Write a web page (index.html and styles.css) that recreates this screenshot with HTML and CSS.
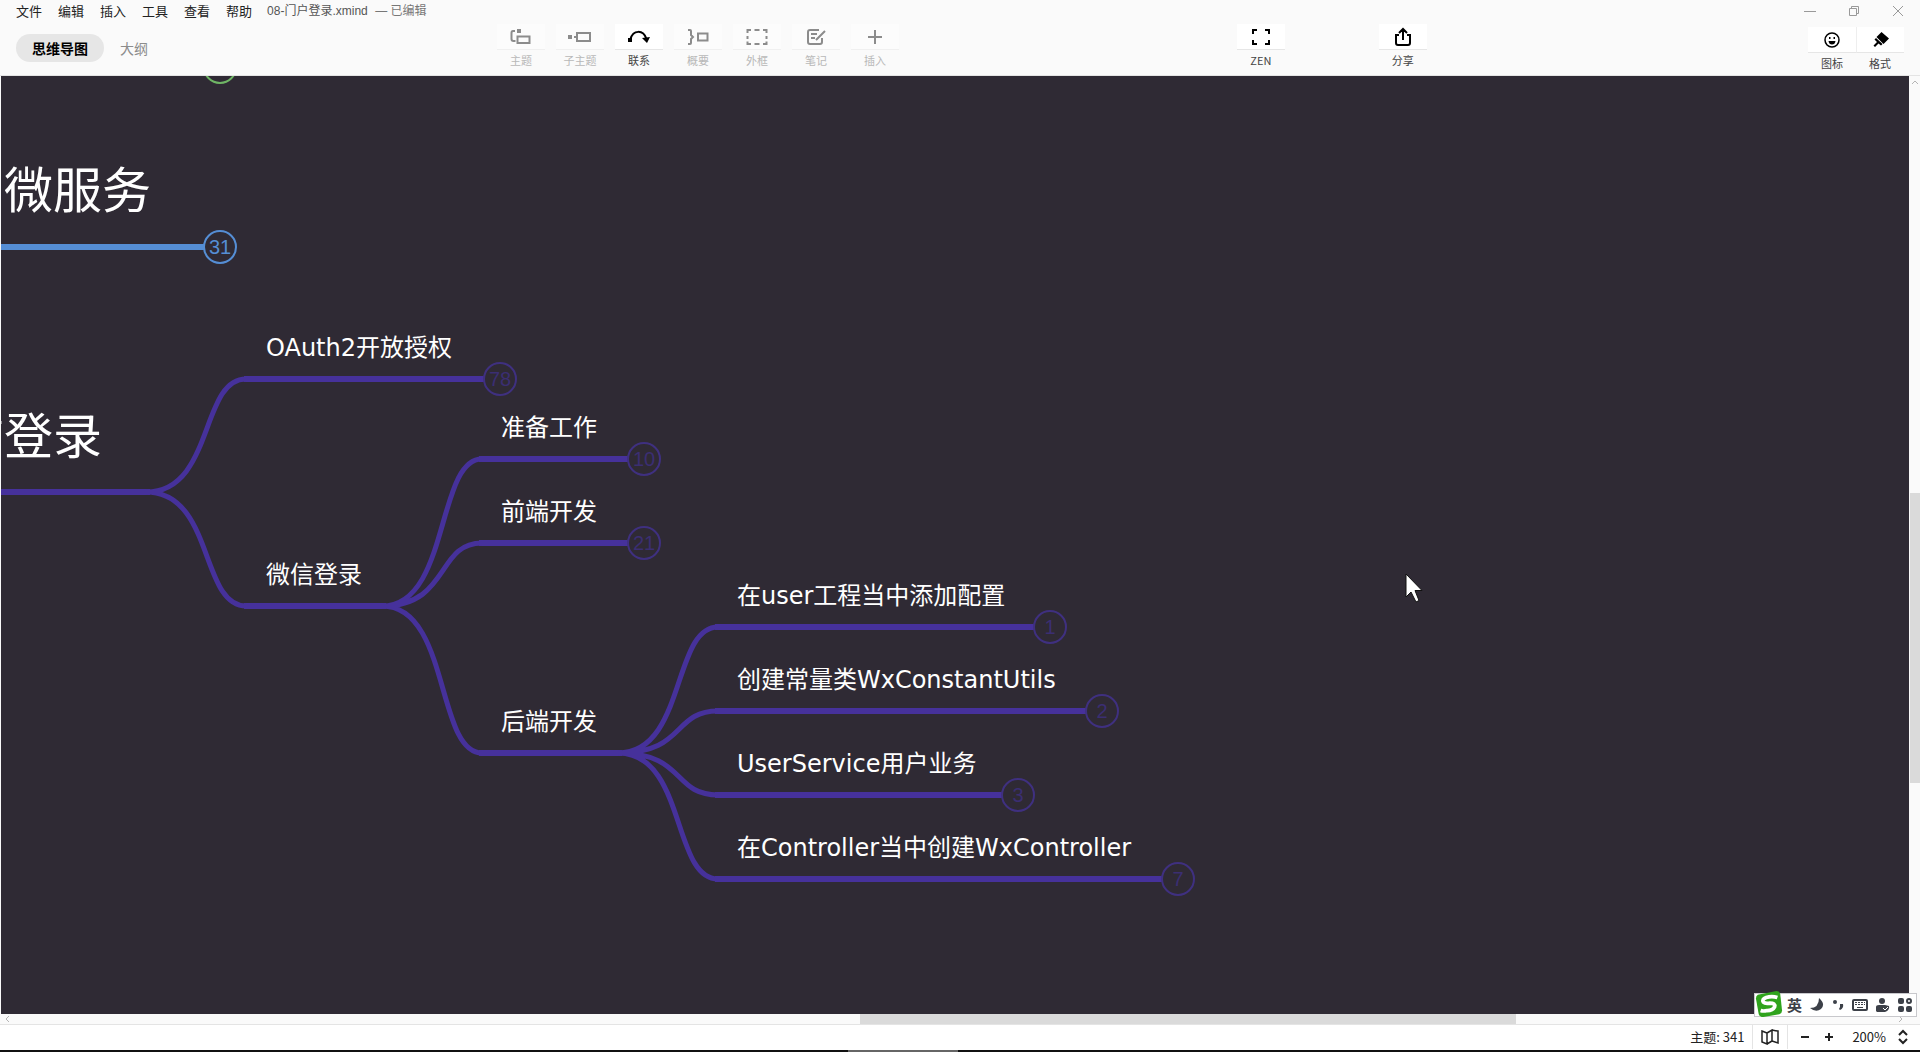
FILE: index.html
```html
<!DOCTYPE html>
<html lang="zh-CN">
<head>
<meta charset="utf-8">
<title>08-门户登录.xmind</title>
<link rel="stylesheet" href="styles.css">
</head>
<body>
<div class="app">
  <header class="header">
    <div class="titlebar">
      <nav class="menu">
        <button>文件</button><button>编辑</button><button>插入</button><button>工具</button><button>查看</button><button>帮助</button>
      </nav>
      <p class="doc-title">08-门户登录.xmind <span class="doc-state">— 已编辑</span></p>
      <div class="window-controls">
        <button aria-label="最小化"><svg width="12" height="12" viewBox="0 0 12 12"><path d="M0 6.500h12"/></svg></button>
        <button aria-label="还原"><svg width="12" height="12" viewBox="0 0 12 12"><path d="M1.500 3.500h7v7h-7zM3.500 3.500v-2h7v7h-2"/></svg></button>
        <button aria-label="关闭"><svg width="12" height="12" viewBox="0 0 12 12"><path d="M1 1l10 10M11 1L1 11"/></svg></button>
      </div>
    </div>
    <div class="toolbar">
      <div class="tabs">
        <button class="tab tab-active">思维导图</button>
        <button class="tab">大纲</button>
      </div>
      <div class="tools tools-edit">
        <button class="tool" disabled><span class="tool-icon"><svg width="22" height="16" viewBox="0 0 22 16"><path d="M5 2H3Q1.500 2 1.500 4v6q0 2 2 2h2M7.500 7.500h12v6.500h-12z"/><path class="solid" d="M7 0h4v4H7z"/></svg></span>主题</button>
        <button class="tool" disabled><span class="tool-icon"><svg width="24" height="16" viewBox="0 0 24 16"><path d="M9 4h13v8H9zM6 8h3"/><path class="solid" d="M0 6h4v4H0z"/></svg></span>子主题</button>
        <button class="tool"><span class="tool-icon"><svg width="22" height="16" viewBox="0 0 22 16"><path d="M2.500 10C5 1 15 0 18.500 10"/><path class="solid" d="M0 9h4v4H0zM14 9l8-1-3 6z"/></svg></span>联系</button>
        <button class="tool" disabled><span class="tool-icon"><svg width="22" height="16" viewBox="0 0 22 16"><path d="M1 1h2q1 0 1 1v4l2 2-2 2v4q0 1-1 1H1M11 4.500h9.500v7H11z"/></svg></span>概要</button>
        <button class="tool" disabled><span class="tool-icon"><svg width="22" height="18" viewBox="0 0 22 18"><path d="M1.500 5V2H5M8.500 2h5M17 2h3.500v3M20.500 8v3M20.500 13.500V16H17M13.500 16h-5M5 16H1.500v-2.500M1.500 11V8"/></svg></span>外框</button>
        <button class="tool" disabled><span class="tool-icon"><svg width="20" height="18" viewBox="0 0 20 18"><path d="M13 2H4Q2 2 2 4v10q0 2 2 2h10q2 0 2-2v-4M5 6h6M5 10h4M10 12l9-9"/></svg></span>笔记</button>
        <button class="tool" disabled><span class="tool-icon"><svg width="16" height="16" viewBox="0 0 16 16"><path d="M8 1v14M1 8h14"/></svg></span>插入</button>
      </div>
      <div class="tools tools-zen">
        <button class="tool"><span class="tool-icon"><svg width="20" height="18" viewBox="0 0 20 18"><path d="M2 6V2h4M14 2h4v4M18 12v4h-4M6 16H2v-4"/></svg></span>ZEN</button>
      </div>
      <div class="tools tools-share">
        <button class="tool"><span class="tool-icon"><svg width="18" height="20" viewBox="0 0 18 20"><path d="M5 8H2v8q0 2 2 2h10q2 0 2-2V8h-3M9 13V2M5 6l4-4 4 4"/></svg></span>分享</button>
      </div>
      <div class="tools tools-panel">
        <button class="tool"><span class="tool-icon"><svg width="16" height="16" viewBox="0 0 16 16"><circle class="thin" cx="8" cy="8" r="7"/><path class="solid" d="M5 5h1.500v2H5zM9.500 5H11v2H9.500zM4.500 9h7q-.5 3.500-3.500 3.500T4.500 9z"/></svg></span>图标</button>
        <button class="tool"><span class="tool-icon"><svg width="16" height="16" viewBox="0 0 16 16"><path class="solid" d="M8.500 0L16 6.500 10.500 12 3.500 5zM3 6l6.500 6-1.500 1.500-2.500-2L2 15 .5 13.500 4 10 1.500 7.500z"/></svg></span>格式</button>
      </div>
    </div>
  </header>

  <div class="workspace">
    <main class="canvas">
      <svg class="links" width="1908" height="938" viewBox="1 76 1908 938">
        <circle class="green" cx="220" cy="67" r="16"/>
        <path class="blue" d="M0 247H204"/>
        <g class="purple">
          <path d="M0 492H150M244 379H484M244 606H386M479 459H628M479 543H628M479 753H622M715 627H1034M715 711H1086M715 795H1002M715 879H1162"/>
          <path class="bend" d="M146 492C214 492 200 379 246 379M146 492C214 492 200 606 246 606"/>
          <path class="bend" d="M382 606C450 606 436 459 482 459M382 606C450 606 436 543 482 543M382 606C450 606 436 753 482 753"/>
          <path class="bend" d="M618 753C686 753 672 627 718 627M618 753C686 753 672 711 718 711M618 753C686 753 672 795 718 795M618 753C686 753 672 879 718 879"/>
        </g>
      </svg>
      <span class="topic topic-main n-user">户微服务</span>
      <span class="topic topic-main n-wechat">信登录</span>
      <span class="topic n-oauth">OAuth2开放授权</span>
      <span class="topic n-login">微信登录</span>
      <span class="topic n-prepare">准备工作</span>
      <span class="topic n-front">前端开发</span>
      <span class="topic n-back">后端开发</span>
      <span class="topic n-config">在user工程当中添加配置</span>
      <span class="topic n-const">创建常量类WxConstantUtils</span>
      <span class="topic n-service">UserService用户业务</span>
      <span class="topic n-controller">在Controller当中创建WxController</span>
      <button class="count count-blue c-user">31</button>
      <button class="count c-oauth">78</button>
      <button class="count c-prepare">10</button>
      <button class="count c-front">21</button>
      <button class="count c-config">1</button>
      <button class="count c-const">2</button>
      <button class="count c-service">3</button>
      <button class="count c-controller">7</button>
      <svg class="pointer" width="20" height="32" viewBox="0 0 20 32"><path d="M1 1v23l5-5 5 10 3-1.500-4-10h7z"/></svg>
    </main>
    <div class="vscroll">
      <svg width="8" height="6" viewBox="0 0 8 6"><path d="M1 5l3-3 3 3"/></svg>
      <div class="vtrack"><div class="vthumb"></div></div>
    </div>
    <div class="hscroll">
      <svg width="6" height="8" viewBox="0 0 6 8"><path d="M5 1L2 4l3 3"/></svg>
      <div class="htrack"><div class="hthumb"></div></div>
      <svg width="6" height="8" viewBox="0 0 6 8"><path d="M1 1l3 3-3 3"/></svg>
    </div>
  </div>

  <footer class="status">
    <span class="topics">主题: 341</span>
    <button class="map" aria-label="导航图"><svg width="18" height="16" viewBox="0 0 18 16"><path d="M1 2l5 2v11l-5-2zM6 4l5-3v11l-5 3M11 1q4 1 6 1v12l-6-2"/></svg></button>
    <div class="zoom">
      <button aria-label="缩小"><svg width="10" height="10" viewBox="0 0 10 10"><path d="M1 5h8"/></svg></button>
      <button aria-label="放大"><svg width="10" height="10" viewBox="0 0 10 10"><path d="M1 5h8M5 1v8"/></svg></button>
      <span class="zoom-value">200%</span>
      <button aria-label="选择缩放"><svg width="10" height="16" viewBox="0 0 10 16"><path d="M1 6l4-4 4 4M1 10l4 4 4-4"/></svg></button>
    </div>
  </footer>
  <div class="taskbar"><div class="taskbar-item"></div></div>

  <div class="ime">
    <svg class="ime-logo" width="28" height="28" viewBox="0 0 30 30"><path fill="#2fa31c" d="M3 5L23 1q3 0 4 3l2 18q0 3-3 4L9 29q-4 0-5-3L1 9q0-3 2-4z"/><path fill="none" stroke="#fff" stroke-width="4" d="M24 8q-6-2-12 0-5 2-3 5 2 2 7 1 6 0 5 4-2 4-8 4-4 1-7 0"/></svg>
    <b>英</b>
    <svg width="14" height="14" viewBox="0 0 14 14"><path d="M9 0q7 6 2 11Q6 15 0 10q9 0 9-10z"/></svg>
    <svg width="12" height="14" viewBox="0 0 12 14"><circle cx="3" cy="4" r="2"/><path d="M8 6h3q1 4-3 6l-1-1 1-2z"/></svg>
    <svg width="16" height="12" viewBox="0 0 16 12"><rect x="1" y="1" width="14" height="10" rx="1" fill="none" stroke="#3c4048" stroke-width="2"/><path fill="none" stroke="#3c4048" stroke-dasharray="2 1" d="M3 3.500h10M3 5.500h10"/><path fill="none" stroke="#3c4048" d="M5 8.500h6"/></svg>
    <svg width="14" height="14" viewBox="0 0 14 14"><circle cx="6" cy="3" r="3"/><path d="M0 13V9q0-2 3-2h6l4 1q1 4-4 6H1z"/><path fill="none" stroke="#fff" d="M7 10l2 2 3-3"/></svg>
    <svg width="14" height="14" viewBox="0 0 14 14"><rect width="6" height="6" rx="2"/><circle cx="11" cy="3" r="2" fill="none" stroke="#3c4048" stroke-width="2"/><rect y="8" width="6" height="6" rx="2"/><rect x="8" y="8" width="6" height="6" rx="2"/></svg>
  </div>
</div>
</body>
</html>
```

FILE: styles.css
```css
* { box-sizing: border-box; }
body {
  margin: 0;
  background: #fff;
  font-family: "Noto Sans CJK SC", "Noto Sans", sans-serif;
  font-size: 13px;
  line-height: 20px;
  color: #222;
}
button {
  margin: 0;
  padding: 0;
  border: 0;
  background: none;
  font: inherit;
  color: inherit;
}
svg { display: block; flex: none; }
.app {
  position: relative;
  display: flex;
  flex-direction: column;
  height: 100vh;
  overflow: hidden;
}

/* header */
.header {
  flex: none;
  height: 76px;
  background: #fafafa;
  border-bottom: 1px solid #e4e4e4;
}
.titlebar {
  display: flex;
  align-items: center;
  height: 22px;
  padding: 0 16px;
}
.menu { display: flex; gap: 16px; }
.doc-title {
  margin: 0 0 0 15px;
  font-family: "Liberation Sans", "Noto Sans CJK SC", sans-serif;
  font-size: 12px;
  color: #555;
}
.doc-state { margin-left: 4px; color: #777; }
.window-controls {
  display: flex;
  gap: 32px;
  margin-left: auto;
}
.window-controls svg { fill: none; stroke: #999; }
.toolbar {
  display: grid;
  grid-template-columns: 476fr auto 327fr auto 83fr auto 376fr auto;
  padding: 0 16px;
}
.tabs {
  display: flex;
  align-items: center;
  gap: 16px;
  height: 52px;
}
.tab { font-size: 14px; line-height: 28px; color: #8c8c8c; }
.tab-active {
  padding: 0 16px;
  border-radius: 14px;
  background: #e6e6e6;
  font-weight: 700;
  color: #000;
}
.tools { display: flex; padding-top: 2px; }
.tools-zen { grid-column: 4; }
.tools-share { grid-column: 6; }
.tools-panel { grid-column: 8; padding-top: 5px; }
.tool {
  display: flex;
  flex-direction: column;
  align-items: center;
  width: 59px;
  font-size: 11px;
  line-height: 20px;
  color: #444;
}
.tools-panel .tool { width: 48px; }
.tool-icon {
  display: flex;
  align-items: center;
  justify-content: center;
  width: 48px;
  height: 26px;
  border-bottom: 1px solid #e6e6e6;
  background: #fff;
  color: #000;
}
.tools-panel .tool + .tool .tool-icon { border-left: 1px solid #eee; }
.tool:disabled { color: #b8b8b8; }
.tool:disabled .tool-icon { background: #fcfcfc; border-color: #f0f0f0; color: #8c8c8c; }
.tool-icon svg { fill: none; stroke: currentColor; stroke-width: 2; }
.tool-icon .solid { fill: currentColor; stroke: none; }
.tool-icon .thin { stroke-width: 1.5; }

/* workspace */
.workspace {
  flex: 1;
  min-height: 0;
  display: grid;
  grid-template: 1fr 11px / 1fr 11px;
  background: #fafafa;
}
.canvas {
  position: relative;
  overflow: hidden;
  margin-left: 1px;
  background: #2f2a34;
}
.links { position: absolute; left: 0; top: 0; fill: none; }
.green { stroke: #6fb565; stroke-width: 2; }
.blue { stroke: #558ed5; stroke-width: 6; }
.purple { stroke: #46319b; stroke-width: 6; }
.bend { stroke-width: 5; }
.topic {
  position: absolute;
  font-family: "DejaVu Sans", "Noto Sans CJK SC", sans-serif;
  font-size: 24px;
  line-height: 36px;
  color: #fff;
  white-space: nowrap;
}
.topic-main { font-size: 49px; line-height: 64px; }
.n-user { left: -46px; top: 84px; }
.n-wechat { left: -46px; top: 330px; }
.n-oauth { left: 265px; top: 254px; }
.n-login { left: 265px; top: 481px; }
.n-prepare { left: 500px; top: 334px; }
.n-front { left: 500px; top: 418px; }
.n-back { left: 500px; top: 628px; }
.n-config { left: 736px; top: 502px; }
.n-const { left: 736px; top: 586px; }
.n-service { left: 736px; top: 670px; }
.n-controller { left: 736px; top: 754px; }
.count {
  position: absolute;
  width: 34px;
  height: 34px;
  border: 2px solid #3f3080;
  border-radius: 50%;
  font-family: "Liberation Sans", sans-serif;
  font-size: 20px;
  line-height: 30px;
  color: #3b2e72;
}
.count-blue { border-color: #558ed5; color: #558ed5; }
.c-user { left: 202px; top: 154px; }
.c-oauth { left: 482px; top: 286px; }
.c-prepare { left: 626px; top: 366px; }
.c-front { left: 626px; top: 450px; }
.c-config { left: 1032px; top: 534px; }
.c-const { left: 1084px; top: 618px; }
.c-service { left: 1000px; top: 702px; }
.c-controller { left: 1160px; top: 786px; }
.pointer { position: absolute; left: 1404px; top: 497px; fill: #fff; stroke: #111; }
.vscroll svg, .hscroll svg { fill: none; stroke: #b5b5b5; }
.vscroll {
  display: flex;
  flex-direction: column;
  align-items: center;
  padding: 3px 0;
}
.vtrack {
  flex: 1;
  width: 100%;
  display: grid;
  grid-template-rows: 408fr 290fr 228fr;
  padding-left: 1px;
}
.vthumb { grid-row: 2; background: #dadada; }
.hscroll {
  grid-column: 1 / 3;
  display: flex;
  align-items: center;
  padding: 0 16px 0 4px;
  border-bottom: 1px solid #e4e4e4;
}
.htrack { flex: 1; height: 100%; display: grid; grid-template-columns: 850fr 656fr 382fr; }
.hthumb { grid-column: 2; background: #dadada; }

/* status bar */
.status {
  flex: none;
  display: flex;
  align-items: center;
  justify-content: flex-end;
  height: 25px;
  padding: 0 12px 1px 0;
}
.status svg { fill: none; stroke: #222; stroke-width: 2; }
.topics { padding-right: 8px; }
.map { padding: 0 8px; height: 24px; border: solid #e4e4e4; border-width: 0 1px; }
.map svg { stroke-width: 1.5; }
.zoom { display: flex; align-items: center; gap: 14px; padding-left: 12px; }
.zoom-value { margin: 0 -2px 0 4px; }
.taskbar { flex: none; height: 2px; background: #111; }
.taskbar-item { width: 110px; height: 2px; margin-left: 848px; background: #666; }

/* floating input method bar */
.ime {
  position: absolute;
  right: 3px;
  bottom: 35px;
  display: flex;
  align-items: center;
  gap: 8px;
  height: 24px;
  padding: 0 4px 0 32px;
  border: 1px solid #c8c8cc;
  background: #fff;
  color: #3c4048;
  font-size: 15px;
}
.ime svg { fill: #3c4048; }
.ime .ime-logo { position: absolute; left: 0; top: -4px; }
```
